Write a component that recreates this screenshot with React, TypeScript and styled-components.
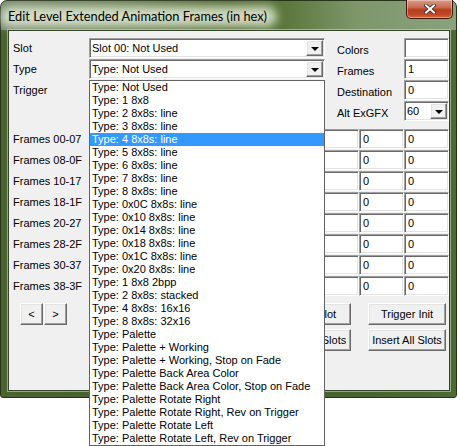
import React from "react";
import styled, { createGlobalStyle, css } from "styled-components";

const Global = createGlobalStyle`
  * { box-sizing: border-box; }
  html, body { margin: 0; padding: 0; background: #ffffff; min-height: 446px; }
  #root { min-height: 446px; }
  body {
    font-family: "Liberation Sans", Arial, sans-serif;
    font-size: 11px;
    color: #000;
  }
`;

const sunken = css`
  border: 1px solid;
  border-color: #a0a0a0 #ffffff #ffffff #a0a0a0;
  box-shadow: inset 1px 1px 0 #696969, inset -1px -1px 0 #e3e3e3;
`;

const raised = css`
  border: 1px solid;
  border-color: #ffffff #696969 #696969 #ffffff;
  box-shadow: inset -1px -1px 0 #a0a0a0, inset 1px 1px 0 #e3e3e3;
`;

const Page = styled.div`
  width: 460px;
  height: 446px;
  position: relative;
  background: #ffffff;
`;

const Window = styled.div`
  width: 457px;
  height: 398px;
  display: flex;
  flex-direction: column;
  border: 1px solid #26341a;
  border-radius: 7px 7px 3px 3px;
  background: linear-gradient(90deg, #4a6331 0%, #44602b 60%, #4d6935 100%);
`;

const TitleBar = styled.div`
  height: 29px;
  display: flex;
  align-items: flex-start;
  padding-left: 7px;
  isolation: isolate;
  border-radius: 6px 6px 0 0;
  background: linear-gradient(
    90deg,
    #76886c 0%,
    #687f52 25%,
    #50682d 50%,
    #5b763a 62%,
    #7e966a 78%,
    #8aa27c 100%
  );
`;

const Title = styled.span`
  position: relative;
  margin-top: 7px;
  font-family: Lato, "Noto Sans", sans-serif;
  font-size: 12.8px;
  line-height: 16px;
  color: #000;
  white-space: nowrap;
  &::before {
    content: "";
    position: absolute;
    left: -8px;
    right: -10px;
    top: -2px;
    bottom: -3px;
    background: rgba(228, 236, 216, 0.85);
    border-radius: 12px;
    filter: blur(5px);
    z-index: -1;
  }
`;

const CloseButton = styled.div`
  margin-left: auto;
  margin-right: 3px;
  margin-top: -1px;
  width: 47px;
  height: 19px;
  border: 1px solid #3c1a10;
  border-top: none;
  border-radius: 0 0 5px 5px;
  background: linear-gradient(
    180deg,
    #dc9a86 0%,
    #cc6e55 40%,
    #b63c1c 55%,
    #c24825 80%,
    #dc6638 100%
  );
  box-shadow: inset 0 0 0 1px rgba(255, 255, 255, 0.35);
  display: flex;
  align-items: center;
  justify-content: center;
`;

const FrameBody = styled.div`
  flex: 1;
  display: flex;
  padding: 0 6px 6px 7px;
`;

const Client = styled.div`
  flex: 1;
  position: relative;
  background: #f0f0f0;
  border: 1px solid #34452a;
  box-shadow: 0 0 0 1px rgba(210, 222, 198, 0.55);
  display: flex;
  flex-direction: column;
  padding: 7px 0 0 4px;
`;

const TopGrid = styled.div`
  display: grid;
  grid-template-columns: 76px 236px 12px 67px 45px;
  grid-template-rows: repeat(4, 21px);
  align-items: start;
`;

const Label = styled.div<{ $col: number; $row: number; $shift?: number }>`
  grid-column: ${(p) => p.$col};
  grid-row: ${(p) => p.$row};
  height: 20px;
  display: flex;
  align-items: center;
  margin-top: ${(p) => p.$shift ?? 0}px;
  white-space: nowrap;
`;

const Combo = styled.div<{ $col?: number; $row?: number }>`
  ${sunken}
  grid-column: ${(p) => p.$col ?? "auto"};
  grid-row: ${(p) => p.$row ?? "auto"};
  height: 20px;
  background: #fff;
  display: flex;
  align-items: center;
  padding: 1px 1px 1px 2px;
  white-space: nowrap;
`;

const ComboText = styled.span`
  flex: 1;
  overflow: hidden;
`;

const DropButton = styled.div`
  ${raised}
  width: 17px;
  height: 16px;
  background: #f0f0f0;
  display: flex;
  align-items: center;
  justify-content: center;
  flex-shrink: 0;
  &::after {
    content: "";
    border-left: 4px solid transparent;
    border-right: 4px solid transparent;
    border-top: 4px solid #000;
    margin-top: 1px;
  }
`;

const Edit = styled.div<{ $col?: number; $row?: number }>`
  ${sunken}
  grid-column: ${(p) => p.$col ?? "auto"};
  grid-row: ${(p) => p.$row ?? "auto"};
  height: 20px;
  background: #fff;
  padding-left: 3px;
  display: flex;
  align-items: center;
  white-space: nowrap;
`;

const FramesGrid = styled.div`
  display: grid;
  grid-template-columns: 76px repeat(8, 45px);
  grid-auto-rows: 20px;
  row-gap: 1px;
  margin-top: 7px;
`;

const RowLabel = styled.div`
  display: flex;
  align-items: center;
  white-space: nowrap;
`;

const ButtonsRow = styled.div`
  display: flex;
  justify-content: space-between;
  align-items: flex-start;
  margin-top: 7px;
`;

const NavGroup = styled.div`
  display: flex;
  gap: 1px;
  margin-left: 7px;
`;

const Button = styled.div<{ $w: number }>`
  ${raised}
  width: ${(p) => p.$w}px;
  height: 22px;
  background: #f0f0f0;
  display: flex;
  align-items: center;
  justify-content: center;
  white-space: nowrap;
`;

const ActionGrid = styled.div`
  display: grid;
  grid-template-columns: 78px 78px;
  column-gap: 17px;
  row-gap: 4px;
  margin-right: 3px;
`;

const DropList = styled.div`
  position: absolute;
  left: 80px;
  top: 49px;
  width: 236px;
  background: #fff;
  border: 1px solid #646464;
  z-index: 10;
`;

const ListItem = styled.div<{ $selected?: boolean }>`
  height: 13px;
  line-height: 13px;
  padding-left: 2px;
  white-space: nowrap;
  background: ${(p) => (p.$selected ? "#3399ff" : "transparent")};
  color: ${(p) => (p.$selected ? "#ffffff" : "#000000")};
`;

const types = [
  "Type: Not Used",
  "Type: 1 8x8",
  "Type: 2 8x8s: line",
  "Type: 3 8x8s: line",
  "Type: 4 8x8s: line",
  "Type: 5 8x8s: line",
  "Type: 6 8x8s: line",
  "Type: 7 8x8s: line",
  "Type: 8 8x8s: line",
  "Type: 0x0C 8x8s: line",
  "Type: 0x10 8x8s: line",
  "Type: 0x14 8x8s: line",
  "Type: 0x18 8x8s: line",
  "Type: 0x1C 8x8s: line",
  "Type: 0x20 8x8s: line",
  "Type: 1 8x8 2bpp",
  "Type: 2 8x8s: stacked",
  "Type: 4 8x8s: 16x16",
  "Type: 8 8x8s: 32x16",
  "Type: Palette",
  "Type: Palette + Working",
  "Type: Palette + Working, Stop on Fade",
  "Type: Palette Back Area Color",
  "Type: Palette Back Area Color, Stop on Fade",
  "Type: Palette Rotate Right",
  "Type: Palette Rotate Right, Rev on Trigger",
  "Type: Palette Rotate Left",
  "Type: Palette Rotate Left, Rev on Trigger",
];

const frameRows = ["00-07", "08-0F", "10-17", "18-1F", "20-27", "28-2F", "30-37", "38-3F"];

/* columns 0-5 lie under the open drop-down list, so their values are not visible */
const VISIBLE_FROM = 6;

const CloseGlyph = () => (
  <svg width="12" height="10" viewBox="0 0 12 10">
    <path d="M2 1.5 L10 8.5 M10 1.5 L2 8.5" stroke="#2e2e2e" strokeWidth="3.6" strokeLinecap="square" />
    <path d="M2 1.5 L10 8.5 M10 1.5 L2 8.5" stroke="#ffffff" strokeWidth="2" strokeLinecap="square" />
  </svg>
);

export default function App() {
  return (
    <Page>
      <Global />
      <Window>
        <TitleBar>
          <Title>Edit Level Extended Animation Frames (in hex)</Title>
          <CloseButton>
            <CloseGlyph />
          </CloseButton>
        </TitleBar>
        <FrameBody>
          <Client>
            <TopGrid>
              <Label $col={1} $row={1}>Slot</Label>
              <Combo $col={2} $row={1}>
                <ComboText>Slot 00: Not Used</ComboText>
                <DropButton />
              </Combo>
              <Label $col={1} $row={2}>Type</Label>
              <Combo $col={2} $row={2}>
                <ComboText>Type: Not Used</ComboText>
                <DropButton />
              </Combo>
              <Label $col={1} $row={3}>Trigger</Label>

              <Label $col={4} $row={1} $shift={2}>Colors</Label>
              <Edit $col={5} $row={1}></Edit>
              <Label $col={4} $row={2} $shift={2}>Frames</Label>
              <Edit $col={5} $row={2}>1</Edit>
              <Label $col={4} $row={3} $shift={2}>Destination</Label>
              <Edit $col={5} $row={3}>0</Edit>
              <Label $col={4} $row={4} $shift={2}>Alt ExGFX</Label>
              <Combo $col={5} $row={4}>
                <ComboText>60</ComboText>
                <DropButton />
              </Combo>
            </TopGrid>

            <FramesGrid>
              {frameRows.map((r) => (
                <React.Fragment key={r}>
                  <RowLabel>Frames {r}</RowLabel>
                  {Array.from({ length: 8 }).map((_, i) => (
                    <Edit key={i}>{i >= VISIBLE_FROM ? "0" : ""}</Edit>
                  ))}
                </React.Fragment>
              ))}
            </FramesGrid>

            <ButtonsRow>
              <NavGroup>
                <Button $w={23}>&lt;</Button>
                <Button $w={23}>&gt;</Button>
              </NavGroup>
              <ActionGrid>
                <Button $w={78}>Clear Slot</Button>
                <Button $w={78}>Trigger Init</Button>
                <Button $w={78}>Clear All Slots</Button>
                <Button $w={78}>Insert All Slots</Button>
              </ActionGrid>
            </ButtonsRow>

            <DropList>
              {types.map((t, i) => (
                <ListItem key={t} $selected={i === 4}>
                  {t}
                </ListItem>
              ))}
            </DropList>
          </Client>
        </FrameBody>
      </Window>
    </Page>
  );
}
